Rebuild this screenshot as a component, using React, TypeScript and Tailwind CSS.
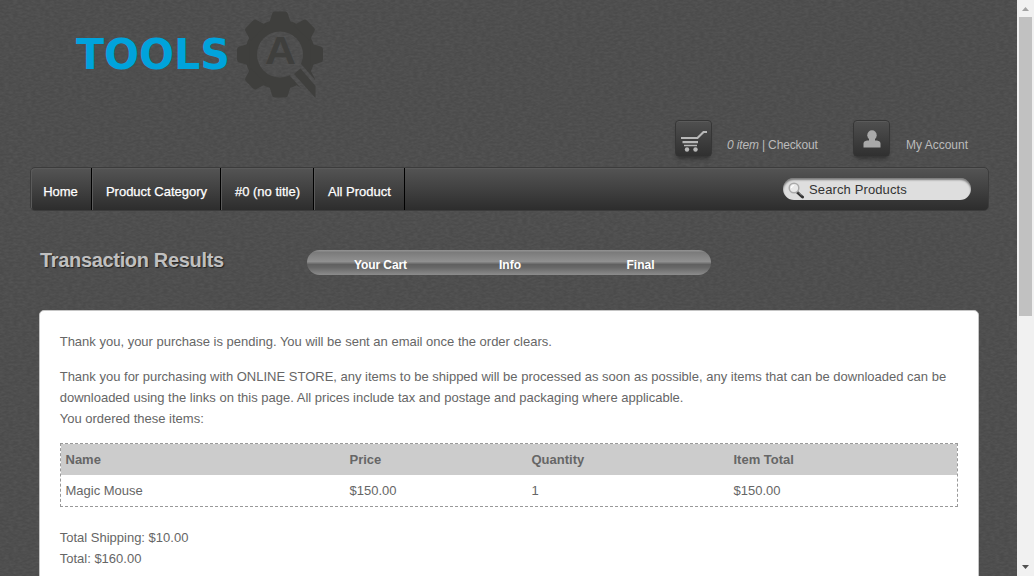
import React from 'react';

const navItems = [
  { label: 'Home', width: 'w-[61px] pr-[2px]' },
  { label: 'Product Category', width: 'w-[129px]' },
  { label: '#0 (no title)', width: 'w-[93px]' },
  { label: 'All Product', width: 'w-[91px]' },
];

function Grain() {
  return (
    <svg className="pointer-events-none absolute inset-0 h-full w-full opacity-[0.04]" aria-hidden="true">
      <filter id="grain" x="0" y="0" width="100%" height="100%" colorInterpolationFilters="sRGB">
        <feTurbulence type="fractalNoise" baseFrequency="0.22 0.5" numOctaves="2" seed="4" />
        <feColorMatrix type="matrix" values="1.6 0 0 0 -0.5  1.6 0 0 0 -0.5  1.6 0 0 0 -0.5  0 0 0 0 1" />
      </filter>
      <rect width="100%" height="100%" filter="url(#grain)" />
    </svg>
  );
}

function Logo() {
  return (
    <svg width="252" height="92" viewBox="74 9 252 92" className="block">
      <text x="76" y="69" textLength="154" lengthAdjust="spacingAndGlyphs" fill="#00a3dc" fontFamily="DejaVu Sans" fontWeight="700" fontSize="42.5">
        TOOLS
      </text>
      <g fill="#3f3f3d">
        <mask id="gearMask">
          <rect x="230" y="5" width="100" height="100" fill="#fff" />
          <circle cx="280" cy="54.5" r="23" fill="#000" />
          <path d="M290 76L295 68L301 64L325 91V105H316Z" fill="#000" />
        </mask>
        <g mask="url(#gearMask)">
          <circle cx="280" cy="54.5" r="35" />
          {[0, 45, 90, 135, 180, 225, 270, 315].map((angle) => (
            <path key={angle} d="M269 24L272 14Q272.500 11.500 275 11.500H285Q287.500 11.500 288 14L291 24Z" transform={`rotate(${angle} 280 54.5)`} />
          ))}
        </g>
        <path d="M294 74L300.500 68.500L315.500 86V98Z" />
        <text x="265" y="64" textLength="31" lengthAdjust="spacingAndGlyphs" fontFamily="Liberation Sans" fontWeight="700" fontSize="38">
          A
        </text>
      </g>
    </svg>
  );
}

function IconTile({ children }: { children: React.ReactNode }) {
  return (
    <div className="flex h-[37px] w-[37px] shrink-0 items-center justify-center rounded-[4px] border border-[#363636] bg-linear-to-b from-[#505050] to-[#303030] shadow-[0_4px_4px_-2px_rgba(0,0,0,0.35),inset_0_1px_0_#5a5a5a]">
      {children}
    </div>
  );
}

function Cart() {
  return (
    <svg className="mt-[4px]" width="28" height="23" viewBox="0 0 28 23" fill="none" stroke="#b8b8b8" strokeWidth="2.2">
      <path d="M1 9H17.500L23.500 3H27M2.500 13.200H18" />
      <path d="M4 16.500H17" strokeWidth="1.500" />
      <circle cx="7" cy="20.500" r="2.200" fill="#b8b8b8" stroke="none" />
      <circle cx="15.500" cy="20.500" r="2.200" fill="#b8b8b8" stroke="none" />
    </svg>
  );
}

function Person() {
  return (
    <svg width="18" height="18" viewBox="0 0 18 18" fill="#a9a9a9">
      <ellipse cx="9" cy="5.200" rx="4.700" ry="4.900" />
      <path d="M6 8H12V10.500H14Q17.500 11 17.500 13.500V17.500H0.500V13.500Q0.500 11 4 10.500H6Z" />
    </svg>
  );
}

function Magnifier() {
  return (
    <svg width="17" height="17" viewBox="0 0 17 17" fill="none">
      <path d="M9.500 10.500L14.500 15" stroke="#333" strokeWidth="3" strokeLinecap="round" />
      <path d="M11 10.500L14 13.500" stroke="#aaa" strokeWidth="1" />
      <circle cx="6" cy="6" r="4.800" fill="#e9e9e9" stroke="#aaa" strokeWidth="1.500" />
      <path d="M3.500 6Q3.500 3.500 6 3.500" stroke="#fff" strokeWidth="1.200" />
    </svg>
  );
}

export default function App() {
  return (
    <div className="flex h-[576px] w-[1034px] overflow-hidden bg-[#4f4f4f] font-['Liberation_Sans',Arial,sans-serif] text-[13px] leading-[21px] text-[#666]">
      <div className="relative h-full w-[1017px] overflow-hidden">
        <Grain />
        <div className="relative flex h-full flex-col">
          <header className="flex h-[167px] shrink-0 flex-col justify-between pt-[9px] pb-[10px]">
            <div className="h-[92px] pl-[74px]">
              <Logo />
            </div>
            <div className="flex h-[37px] pl-[675px] text-[12px] text-[#bbb]">
              <IconTile><Cart /></IconTile>
              <p className="w-[141px] shrink-0 pt-[15px] pl-[15px] tracking-[-0.15px] whitespace-nowrap"><em>0 item</em> | Checkout</p>
              <IconTile><Person /></IconTile>
              <p className="pt-[15px] pl-[16px] whitespace-nowrap">My Account</p>
            </div>
          </header>

          <nav className="ml-[30px] flex h-[44px] w-[959px] shrink-0 items-stretch overflow-hidden rounded-[5px] border border-[#3c3c3c] bg-linear-to-b from-[#545454] via-[#414141] to-[#2d2d2d] shadow-[inset_1px_1px_0_#5a5a5a]">
            {navItems.map((item) => (
              <a key={item.label} className={`${item.width} flex shrink-0 items-center justify-center border-r border-r-black border-l border-l-[#5a5a5a] pt-[4px] text-[13px] whitespace-nowrap text-white [-webkit-text-stroke:0.25px_white]`}>
                {item.label}
              </a>
            ))}
            <div className="mt-[10px] mr-[17px] ml-auto flex h-[22px] w-[188px] items-center rounded-full bg-[#dedede] pl-[5px] text-[13px] text-[#333] shadow-[inset_0_2px_2px_rgba(0,0,0,0.45)]">
              <div className="mt-[3px] w-[21px]"><Magnifier /></div>
              <span className="tracking-[0.12px]">Search Products</span>
            </div>
          </nav>

          <div className="flex h-[99px] shrink-0 items-start pt-[39px] pl-[40px]">
            <h1 className="w-[267px] text-[20px] leading-[21px] font-bold tracking-[-0.33px] text-[#c0c0c0] [text-shadow:1px_1px_1px_#222]">Transaction Results</h1>
            <ol className="flex h-[25px] w-[404px] rounded-full bg-[linear-gradient(to_bottom,#939393_0%,#7b7b7b_10%,#909090_46%,#606060_58%,#676767_70%,#8c8c8c_100%)] pt-[5px] text-[12px] font-bold text-white">
              <li className="w-[147px] text-center tracking-[-0.1px]">Your Cart</li>
              <li className="w-[112px] text-center">Info</li>
              <li className="w-[145px] pl-[4px] text-center">Final</li>
            </ol>
          </div>

          <main className="ml-[39px] h-[300px] w-[940px] shrink-0 rounded-t-[5px] border border-[#c5c5c5] bg-white px-[20px] pt-[20px]">
            <p className="mb-[14px] -ml-[0.3px]">Thank you, your purchase is pending. You will be sent an email once the order clears.</p>
            <p className="-ml-[0.3px] whitespace-nowrap">
              Thank you for purchasing with ONLINE STORE, any items to be shipped will be processed as soon as possible, any items that can be downloaded can be<br />
              downloaded using the links on this page. All prices include tax and postage and packaging where applicable.<br />
              You ordered these items:
            </p>
            <table className="mt-[14px] w-[898px] table-fixed border-separate border-spacing-0 border border-dashed border-[#999] text-left">
              <colgroup>
                <col className="w-[284px]" />
                <col className="w-[182px]" />
                <col className="w-[202px]" />
                <col />
              </colgroup>
              <thead className="bg-[#ccc]">
                <tr className="h-[31px]">
                  {['Name', 'Price', 'Quantity', 'Item Total'].map((label) => (
                    <th key={label} className="px-[4.5px] py-0 font-bold">{label}</th>
                  ))}
                </tr>
              </thead>
              <tbody>
                <tr className="h-[31px]">
                  <td className="px-[4.5px]">Magic Mouse</td>
                  <td className="px-[4.5px]">$150.00</td>
                  <td className="px-[4.5px]">1</td>
                  <td className="px-[4.5px]">$150.00</td>
                </tr>
              </tbody>
            </table>
            <p className="mt-[20px] -ml-[0.3px]">Total Shipping: $10.00<br />Total: $160.00</p>
          </main>
        </div>
      </div>

      <aside className="flex h-full w-[17px] shrink-0 flex-col items-center bg-[#f1f1f1]">
        <svg width="17" height="17" fill="#a3a3a3"><path d="M5 11L8.500 7L12 11Z" /></svg>
        <div className="h-[299px] w-[13px] bg-[#c1c1c1]" />
        <svg className="mt-auto" width="17" height="17" fill="#505050"><path d="M5 6H12L8.500 10Z" /></svg>
      </aside>
    </div>
  );
}
